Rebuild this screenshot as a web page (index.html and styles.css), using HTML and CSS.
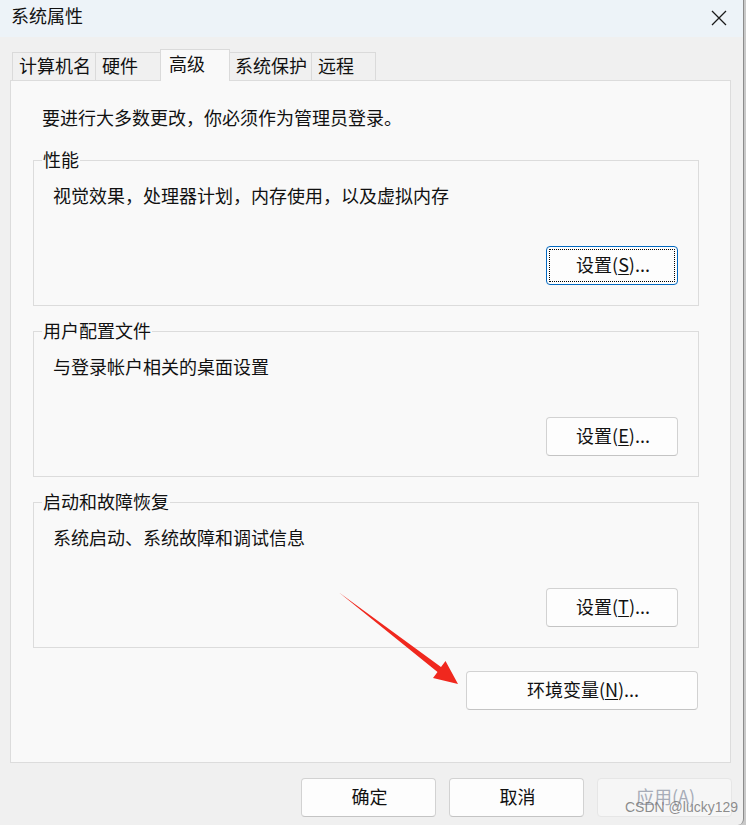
FILE: index.html
```html
<!DOCTYPE html>
<html lang="zh-CN">
<head>
<meta charset="utf-8">
<title>系统属性</title>
<link rel="stylesheet" href="styles.css">
</head>
<body>
<div class="dialog">
  <div class="titlebar">
    <span class="title">系统属性</span>
    <svg class="close" width="16" height="16" viewBox="0 0 16 16"><path d="M1 1 L15 15 M15 1 L1 15" stroke="#1a1a1a" stroke-width="1.3" fill="none"/></svg>
  </div>
  <div class="content">
    <div class="tabs">
      <div class="tab t1">计算机名</div>
      <div class="tab t2">硬件</div>
      <div class="tab t3 active">高级</div>
      <div class="tab t4">系统保护</div>
      <div class="tab t5">远程</div>
    </div>
    <div class="panel">
      <p class="note">要进行大多数更改，你必须作为管理员登录。</p>
      <div class="group">
        <span class="group-title">性能</span>
        <p class="desc">视觉效果，处理器计划，内存使用，以及虚拟内存</p>
        <button class="btn focus">设置(<u>S</u>)...</button>
      </div>
      <div class="group">
        <span class="group-title">用户配置文件</span>
        <p class="desc">与登录帐户相关的桌面设置</p>
        <button class="btn">设置(<u>E</u>)...</button>
      </div>
      <div class="group">
        <span class="group-title">启动和故障恢复</span>
        <p class="desc">系统启动、系统故障和调试信息</p>
        <button class="btn">设置(<u>T</u>)...</button>
      </div>
      <button class="btn env">环境变量(<u>N</u>)...</button>
    </div>
    <div class="footer">
      <button class="btn wide">确定</button>
      <button class="btn wide">取消</button>
      <button class="btn wide disabled">应用(A)</button>
    </div>
  </div>
</div>
<div class="watermark">CSDN @lucky129</div>
<svg class="arrow" width="746" height="825" viewBox="0 0 746 825">
  <polygon points="339,592.5 441,667 445.5,661 458,684 433,678 437.5,672" fill="#f0281e"/>
</svg>
</body>
</html>
```

FILE: styles.css
```css
* { box-sizing: border-box; }
html, body { margin: 0; padding: 0; }
body {
  width: 746px;
  height: 825px;
  background: #c9c9c9;
  font-family: "Noto Sans CJK SC", "Microsoft YaHei", sans-serif;
  font-size: 18px;
  color: #111;
  position: relative;
  overflow: hidden;
}
.dialog {
  width: 744px;
  height: 825px;
  display: flex;
  flex-direction: column;
  background: #f0f0f0;
  border-right: 1px solid #8c8c8c;
  border-bottom-right-radius: 6px;
  overflow: hidden;
}
.titlebar {
  height: 37px;
  flex: none;
  background: #edf3f8;
  display: flex;
  align-items: center;
  justify-content: space-between;
  padding: 0 16px 7px 11px;
}
.title { line-height: 24px; }
.close { display: block; margin-top: 5px; }
.content {
  flex: 1;
  display: flex;
  flex-direction: column;
}
.tabs {
  margin-top: 12px;
  height: 31px;
  display: flex;
  align-items: flex-end;
  padding-left: 12px;
}
.tab {
  height: 28px;
  border: 1px solid #dadada;
  border-bottom: none;
  margin-left: -1px;
  display: flex;
  align-items: center;
  line-height: 24px;
  background: #f0f0f0;
  padding-bottom: 3px;
}
.t1 { width: 84px; margin-left: 0; padding-left: 6px; }
.t2 { width: 66px; padding-left: 6px; }
.t3 { width: 70px; padding-left: 8px; }
.t4 { width: 83px; padding-left: 5px; }
.t5 { width: 65px; padding-left: 6px; }
.tab.active {
  height: 32px;
  margin-bottom: -1px;
  background: #f9f9f9;
  position: relative;
  z-index: 1;
  padding-bottom: 6px;
}
.panel {
  margin-left: 10px;
  width: 721px;
  height: 683px;
  flex: none;
  background: #f9f9f9;
  border: 1px solid #dcdcdc;
  padding: 24px 31px 0 22px;
  display: flex;
  flex-direction: column;
}
.note {
  margin: 0 0 31px 9px;
  line-height: 24px;
}
.group {
  position: relative;
  height: 146px;
  flex: none;
  border: 1px solid #dcdcdc;
  padding: 22px 20px 20px 19px;
  display: flex;
  flex-direction: column;
  margin-bottom: 25px;
}
.group-title {
  position: absolute;
  top: -14px;
  left: 8px;
  padding: 0 1px;
  line-height: 24px;
  background: #f9f9f9;
}
.desc {
  margin: 0;
  line-height: 24px;
}
.btn {
  font: inherit;
  color: #111;
  height: 39px;
  width: 132px;
  background: #fdfdfd;
  border: 1px solid #d2d2d2;
  border-bottom-color: #c4c4c4;
  border-radius: 4px;
  padding: 0 0 3px 2px;
  line-height: 24px;
}
.group .btn {
  margin-top: auto;
  align-self: flex-end;
}
.btn u { text-underline-offset: 2px; }
.btn.focus {
  border-color: #0067c0;
  outline: 1px dotted #000;
  outline-offset: -4px;
}
.btn.env {
  margin-top: -2px;
  align-self: flex-end;
  margin-right: 1px;
  width: 232px;
}
.footer {
  display: flex;
  justify-content: flex-end;
  gap: 13px;
  padding: 15px 11px 0 0;
}
.btn.wide { width: 135px; }
.btn.disabled {
  background: #f6f6f6;
  border-color: #e6e6e6;
  color: #a7acb8;
}
.watermark {
  position: absolute;
  left: 625px;
  top: 799px;
  white-space: nowrap;
  font-family: "Liberation Sans", Arial, sans-serif;
  font-size: 14px;
  color: rgba(120, 120, 120, 0.85);
  line-height: 17px;
}
.arrow {
  position: absolute;
  left: 0;
  top: 0;
  pointer-events: none;
}
```
